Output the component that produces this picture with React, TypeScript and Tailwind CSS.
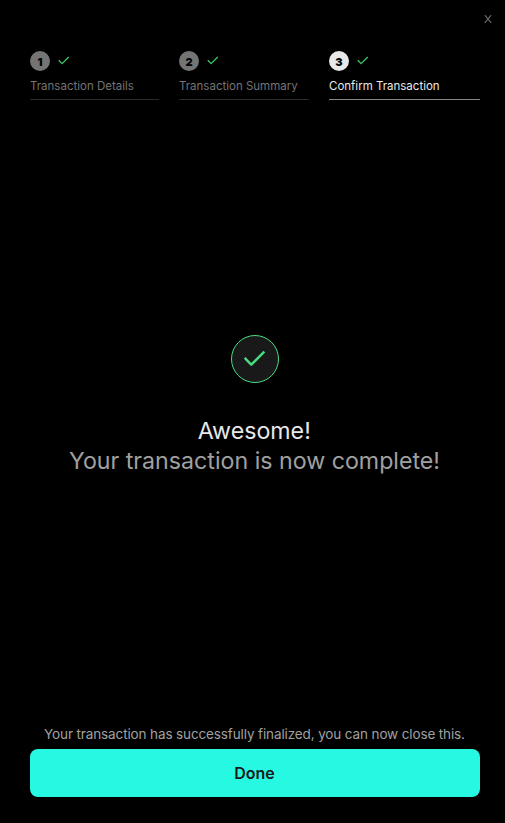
import React from "react";

function Tick({ className, strokeWidth }: { className: string; strokeWidth: number }) {
  return (
    <svg
      viewBox="0 0 12 9"
      className={className}
      fill="none"
      stroke="currentColor"
      strokeWidth={strokeWidth}
      strokeLinejoin="round"
    >
      <path d="M0.8 4.2 4.3 7.8 11.2 0.9" />
    </svg>
  );
}

interface StepProps {
  number: number;
  label: string;
  width: string;
  active?: boolean;
}

function Step({ number, label, width, active = false }: StepProps) {
  return (
    <li className={`flex h-[49px] flex-col border-b ${width} ${active ? "border-[#858585]" : "border-[#292929]"}`}>
      <div className="flex h-5 items-center gap-2">
        <span
          className={`flex size-5 items-center justify-center rounded-full pt-[3px] text-[11px] leading-none font-black text-black ${
            active ? "bg-[#e8e8e8]" : "bg-[#747474]"
          }`}
        >
          {number}
        </span>
        <Tick className="mb-px h-[9px] w-[11.5px] text-[#3bce6b]" strokeWidth={1.3} />
      </div>
      <span
        className={`mt-[7px] text-[11.5px] leading-4 whitespace-nowrap ${active ? "text-[#e8e8e8]" : "text-[#747474]"}`}
      >
        {label}
      </span>
    </li>
  );
}

export default function App() {
  return (
    <main className="relative flex h-screen w-full flex-col bg-black pt-[51px] pr-[25px] pb-[26px] pl-[30px] font-['Inter',sans-serif]">
      <button aria-label="Close" className="absolute top-[15px] right-[13.5px] text-[#6c6c6c]">
        <svg viewBox="0 0 8 8" className="size-2" fill="none" stroke="currentColor" strokeWidth="1.2">
          <path d="M0.8 0.2 7.2 7.8M7.2 0.2 0.8 7.8" />
        </svg>
      </button>
      <ol className="flex gap-5">
        <Step number={1} label="Transaction Details" width="w-[129px]" />
        <Step number={2} label="Transaction Summary" width="w-[130px]" />
        <Step number={3} label="Confirm Transaction" width="w-[151px]" active />
      </ol>
      <section className="flex flex-1 flex-col items-center pt-[235px] text-[23.2px] leading-[30px]">
        <div className="mb-[33px] flex size-12 items-center justify-center rounded-full border border-[#48de80] bg-[#191919] pr-px pb-px">
          <Tick className="h-[17px] w-[23px] text-[#48de80]" strokeWidth={1.3} />
        </div>
        <h1 className="pr-[1.5px] whitespace-nowrap text-[#e8e8e8]">Awesome!</h1>
        <p className="pr-px whitespace-nowrap text-[#a0a0a0]">Your transaction is now complete!</p>
      </section>
      <p className="mb-[5px] pr-px text-center text-[13.5px] leading-5 tracking-[-0.125px] whitespace-nowrap text-[#a0a0a0]">
        Your transaction has successfully finalized, you can now close this.
      </p>
      <button className="h-12 w-full shrink-0 rounded-lg bg-[#26f8e1] pr-px text-base font-semibold text-[#191919]">
        Done
      </button>
    </main>
  );
}
